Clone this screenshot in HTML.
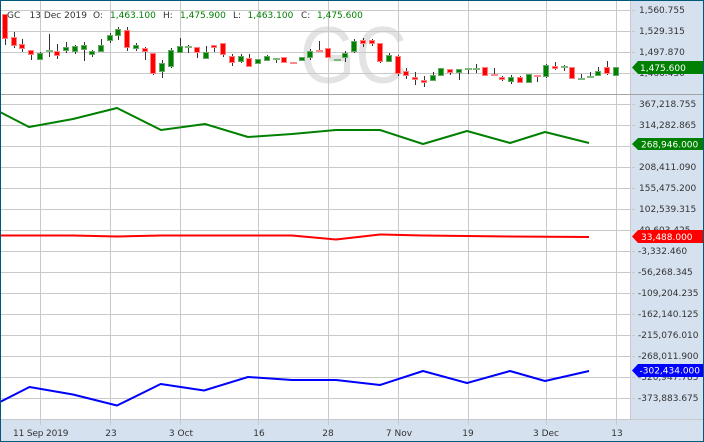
<!DOCTYPE html>
<html><head><meta charset="utf-8"><style>
html,body{margin:0;padding:0;background:#fff}
svg{display:block}
text{font-family:"DejaVu Sans","Liberation Sans",sans-serif;font-size:9px}
.a text{fill:#333}
.t text{fill:#fff;font-weight:400}
</style></head><body>
<svg width="704" height="442" viewBox="0 0 704 442" xmlns="http://www.w3.org/2000/svg">
<rect width="704" height="442" fill="#fff"/>
<!-- watermark -->
<text transform="translate(300 82.5) scale(.88 1)" style="font-family:'Liberation Sans',sans-serif;font-size:81px;fill:#e3e3e3">GC</text>
<!-- panels -->
<rect x="630" y="0" width="74" height="442" fill="#d6e1ef"/>
<rect x="0" y="419" width="704" height="23" fill="#d6e1ef"/>
<!-- grid -->
<path stroke="#c9c9c9" fill="none" d="M0 10.5H630M0 31.5H630M0 52.5H630M0 73.5H630M0 104.5H630M0 125.5H630M0 146.5H630M0 167.5H630M0 188.5H630M0 209.5H630M0 230.5H630M0 251.5H630M0 272.5H630M0 293.5H630M0 314.5H630M0 335.5H630M0 356.5H630M0 377.5H630M0 398.5H630M40.5 0V425M110.5 0V425M180.5 0V425M258.5 0V425M328.5 0V425M398.5 0V425M468.5 0V425M546.5 0V425M616.5 0V425M630.5 0V419M0 419.5H704M632 10.5h3M632 31.5h3M632 52.5h3M632 73.5h3M632 104.5h3M632 125.5h3M632 146.5h3M632 167.5h3M632 188.5h3M632 209.5h3M632 230.5h3M632 251.5h3M632 272.5h3M632 293.5h3M632 314.5h3M632 335.5h3M632 356.5h3M632 377.5h3M632 398.5h3"/>
<path stroke="#a3a3a3" fill="none" d="M0 94.5H704"/>
<!-- wicks -->
<path stroke="#333" fill="none" d="M5.5 15V45M14.5 32V48M22.5 39V52M31.5 50V60M40.5 52V60M49.5 34V57M57.5 44V59M66.5 42V53M75.5 45V54M84.5 42V61M92.5 50V57M101.5 39V52M110.5 33V43M118.5 27V40M127.5 27V51M136.5 43V51M145.5 47V60M153.5 54V75M162.5 60V78M171.5 48V68M180.5 38V53M188.5 45V53M197.5 47V58M206.5 46V59M214.5 45V52M223.5 43V57M232.5 54V66M241.5 54V63M249.5 54V67M258.5 59V64M267.5 55V61M276.5 58V63M284.5 57V63M293.5 62V64M302.5 57V61M310.5 49V60M319.5 41V52M328.5 48V58M337.5 59V61M345.5 51V62M354.5 39V53M363.5 38V47M372.5 39V46M380.5 43V63M389.5 53V62M398.5 55V76M406.5 68V79M415.5 72V85M424.5 76V87M433.5 72V81M441.5 68V76M450.5 69V75M459.5 69V80M468.5 68V74M476.5 64V73M485.5 67V76M494.5 68V76M502.5 76V81M511.5 75V84M520.5 76V83M529.5 74V83M537.5 75V82M546.5 64V78M555.5 62V70M564.5 65V71M572.5 67V79M581.5 74V80M590.5 72V78M598.5 67V76M607.5 61V75M616.5 67V76"/>
<!-- red bodies -->
<path fill="#ff0000" stroke="#ff7f7f" d="M2.5 14.5h5V38.5h-5zM11.5 37.5h5V45.5h-5zM19.5 44.5h5V48.5h-5zM28.5 50.5h5V54.5h-5zM54.5 51.5h5V55.5h-5zM124.5 30.5h5V47.5h-5zM142.5 48.5h5V51.5h-5zM150.5 53.5h5V73.5h-5zM194.5 47.5h5V52.5h-5zM211.5 45.5h5V47.5h-5zM220.5 43.5h5V54.5h-5zM229.5 56.5h5V62.5h-5zM246.5 58.5h5V66.5h-5zM281.5 57.5h5V62.5h-5zM325.5 48.5h5V57.5h-5zM360.5 40.5h5V43.5h-5zM369.5 40.5h5V43.5h-5zM377.5 43.5h5V61.5h-5zM395.5 56.5h5V73.5h-5zM403.5 71.5h5V75.5h-5zM412.5 77.5h5V79.5h-5zM421.5 80.5h5V82.5h-5zM447.5 69.5h5V72.5h-5zM482.5 67.5h5V75.5h-5zM499.5 77.5h5V79.5h-5zM517.5 77.5h5V82.5h-5zM552.5 66.5h5V68.5h-5zM569.5 67.5h5V78.5h-5zM604.5 67.5h5V73.5h-5z"/>
<!-- green bodies -->
<path fill="#008000" stroke="#66aa66" d="M37.5 53.5h5V59.5h-5zM63.5 47.5h5V50.5h-5zM72.5 46.5h5V51.5h-5zM81.5 45.5h5V49.5h-5zM89.5 51.5h5V54.5h-5zM98.5 45.5h5V51.5h-5zM107.5 35.5h5V40.5h-5zM115.5 29.5h5V35.5h-5zM133.5 45.5h5V48.5h-5zM159.5 63.5h5V71.5h-5zM168.5 50.5h5V66.5h-5zM177.5 46.5h5V52.5h-5zM203.5 52.5h5V58.5h-5zM238.5 56.5h5V61.5h-5zM255.5 59.5h5V63.5h-5zM264.5 56.5h5V60.5h-5zM299.5 57.5h5V60.5h-5zM307.5 51.5h5V57.5h-5zM342.5 53.5h5V57.5h-5zM351.5 41.5h5V51.5h-5zM386.5 55.5h5V61.5h-5zM430.5 75.5h5V80.5h-5zM438.5 68.5h5V75.5h-5zM456.5 69.5h5V72.5h-5zM508.5 77.5h5V81.5h-5zM526.5 74.5h5V82.5h-5zM543.5 65.5h5V76.5h-5zM595.5 71.5h5V75.5h-5zM613.5 67.5h5V75.5h-5z"/>
<!-- doji -->
<path stroke="#7fb87f" fill="none" stroke-width="2" d="M46 51h7M185 47h7M273 59h7M334 60h7M465 69h7M473 69h7M561 67h7M578 79h7M587 77h7"/>
<path stroke="#ff8a8a" fill="none" stroke-width="2" d="M290 63h7M316 51h7M491 75h7M534 76h7"/>
<!-- lines -->
<g fill="none" stroke-width="2" stroke-linejoin="round">
<polyline stroke="#008000" points="0,112 29,127 73,119 117,108 161,130 205,124 248,137 292,134 336,130 380,130 423,144 467,131 510,143 545,132 589,143"/>
<polyline stroke="#ff0000" points="0,235.5 73,235.5 117,236.5 161,235.5 292,235.5 336,239.5 380,234.5 423,235.5 510,236.5 589,237"/>
<polyline stroke="#0000ff" points="0,402 29.5,387 73,394.5 117,405.5 160.7,384 204,390.5 248,377 292,380 336,380 380,385 423,371 467,383 510,371 545,381 589,371"/>
</g>
<!-- header -->
<g class="a">
<text x="7" y="18">GC</text><text x="29.5" y="18">13 Dec 2019</text><text x="93" y="18">O:</text><text x="163" y="18">H:</text><text x="233" y="18">L:</text><text x="301" y="18">C:</text>
</g>
<g fill="#008000">
<text x="110" y="18">1,463.100</text><text x="180" y="18">1,475.900</text><text x="247.5" y="18">1,463.100</text><text x="317" y="18">1,475.600</text>
</g>
<!-- axis labels -->
<g class="a">
<text x="639" y="13">1,560.755</text>
<text x="639" y="34">1,529.315</text>
<text x="639" y="55">1,497.870</text>
<text x="639" y="76">1,466.430</text>
<text x="639" y="107">367,218.755</text>
<text x="639" y="128">314,282.865</text>
<text x="639" y="170">208,411.090</text>
<text x="639" y="191">155,475.200</text>
<text x="639" y="212">102,539.315</text>
<text x="639" y="233">49,603.425</text>
<text x="638" y="254">-3,332.460</text>
<text x="638" y="275">-56,268.345</text>
<text x="638" y="296">-109,204.235</text>
<text x="638" y="317">-162,140.125</text>
<text x="638" y="338">-215,076.010</text>
<text x="638" y="359">-268,011.900</text>
<text x="638" y="380">-320,947.785</text>
<text x="638" y="401">-373,883.675</text>
<text x="13" y="436" textLength="55.5">11 Sep 2019</text>
<text x="111" y="436" text-anchor="middle">23</text>
<text x="181" y="436" text-anchor="middle">3 Oct</text>
<text x="259" y="436" text-anchor="middle">16</text>
<text x="328" y="436" text-anchor="middle">28</text>
<text x="399" y="436" text-anchor="middle">7 Nov</text>
<text x="468" y="436" text-anchor="middle">19</text>
<text x="546" y="436" text-anchor="middle">3 Dec</text>
<text x="617" y="436" text-anchor="middle">13</text>
</g>
<!-- tags -->
<g class="t">
<path fill="#008000" d="M632 67.5L638 61H703V74H638z"/><text x="640" y="71">1,475.600</text>
<path fill="#008000" d="M632 144L638 138H703V150H638z"/><text x="641" y="147.5">268,946.000</text>
<path fill="#ff0000" d="M632 236.5L638 230H703V243H638z"/><text x="641" y="240">33,488.000</text>
<path fill="#0000ff" d="M632 370.5L638 364H703V377H638z"/><text x="639.5" y="373.5">-302,434.000</text>
</g>
<!-- outer border -->
<rect x=".5" y=".5" width="703" height="441" fill="none" stroke="#00597a"/>
</svg>
</body></html>
